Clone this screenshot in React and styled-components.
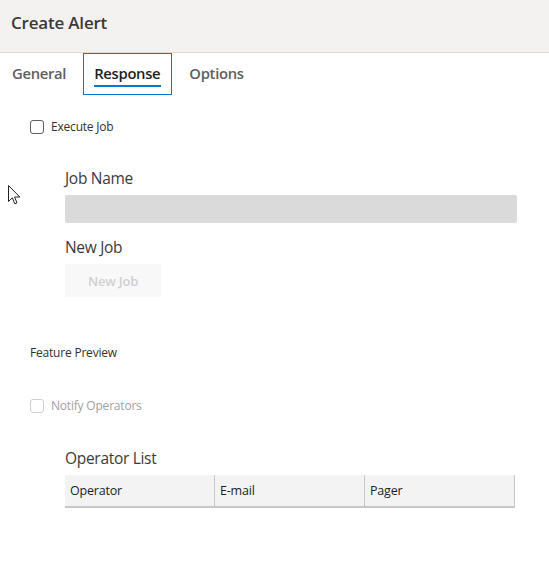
import React from 'react';
import styled, { createGlobalStyle } from 'styled-components';

const GlobalStyle = createGlobalStyle`
  html, body {
    margin: 0;
    padding: 0;
    background: #ffffff;
    font-family: "Open Sans", "Noto Sans", sans-serif;
    color: #323130;
  }
`;

const Page = styled.div`
  position: relative;
  width: 549px;
  height: 572px;
  overflow: hidden;
  background: #fff;
`;

const Header = styled.div`
  height: 53px;
  background: #f3f2f1;
  border-bottom: 1px solid #dcdcdc;
  display: flex;
  align-items: center;
  padding: 0 0 7px 11px;
  box-sizing: border-box;
  h1 {
    margin: 0;
    font-size: 17px;
    font-weight: 600;
    color: #3b3a39;
    letter-spacing: -0.2px;
  }
`;

const TabBar = styled.div`
  display: flex;
  height: 42px;
  align-items: stretch;
`;

const Tab = styled.div`
  position: relative;
  display: flex;
  align-items: center;
  box-sizing: border-box;
  padding: 0 ${(p) => (p.$first ? '0' : '10.5px')} 3px;
  margin-left: ${(p) => (p.$first ? '11px' : '0')};
  margin-right: ${(p) => (p.$first ? '15.5px' : '6px')};
  font-size: 14.8px;
  font-weight: 600;
  letter-spacing: -0.3px;
  color: ${(p) => (p.$active ? '#201f1e' : '#605e5c')};
  border: 1px solid ${(p) => (p.$active ? '#0078d4' : 'transparent')};
  &::after {
    content: '';
    display: ${(p) => (p.$active ? 'block' : 'none')};
    position: absolute;
    left: 10px;
    right: 10px;
    bottom: 7px;
    height: 2px;
    background: #0078d4;
  }
`;

const Body = styled.div`
  padding: 23px 0 0 30px;
`;

const CheckRow = styled.label`
  display: flex;
  align-items: center;
  gap: 7px;
  font-size: 12px;
  color: ${(p) => (p.$disabled ? '#a19f9d' : '#323130')};
  letter-spacing: -0.2px;
  margin-top: ${(p) => p.$gap || 0}px;
`;

const Box = styled.span`
  width: 14px;
  height: 14px;
  box-sizing: border-box;
  border: 1px solid ${(p) => (p.$disabled ? '#d2d0ce' : '#605e5c')};
  border-radius: 3px;
  background: #fff;
`;

const Indented = styled.div`
  padding-left: 35px;
  padding-right: 32px;
  margin-top: ${(p) => p.$gap}px;
`;

const FieldLabel = styled.div`
  font-size: 15.5px;
  color: #3b3a39;
  letter-spacing: -0.3px;
  line-height: 22px;
  margin-top: ${(p) => p.$gap || 0}px;
`;

const TextInput = styled.div`
  height: 28px;
  background: #dadada;
  border-radius: 2px;
  margin-top: 6px;
`;

const DisabledButton = styled.div`
  width: 96px;
  height: 33px;
  margin-top: 6px;
  border-radius: 2px;
  background: #f8f8f8;
  color: #d0d0d0;
  font-size: 13px;
  font-weight: 600;
  display: flex;
  align-items: center;
  justify-content: center;
  letter-spacing: -0.2px;
`;

const SmallText = styled.div`
  font-size: 12px;
  color: #323130;
  letter-spacing: -0.2px;
  margin-top: ${(p) => p.$gap}px;
`;

const Table = styled.div`
  display: grid;
  grid-template-columns: 150px 150px 150px;
  width: 450px;
  height: 33px;
  background: #f3f3f4;
  border-bottom: 2px solid #c6c6c6;
  box-sizing: border-box;
  margin-top: 6px;
`;

const HeadCell = styled.div`
  display: flex;
  align-items: center;
  padding-left: 5px;
  font-size: 12.5px;
  color: #201f1e;
  letter-spacing: -0.2px;
  border-right: 1px solid #c8c8c8;
`;

const Cursor = styled.svg`
  position: absolute;
  left: 8px;
  top: 185px;
`;

export default function App() {
  return (
    <Page>
      <GlobalStyle />
      <Header>
        <h1>Create Alert</h1>
      </Header>
      <TabBar>
        <Tab $first>General</Tab>
        <Tab $active>Response</Tab>
        <Tab>Options</Tab>
      </TabBar>
      <Body>
        <CheckRow>
          <Box />
          Execute Job
        </CheckRow>
        <Indented $gap={32}>
          <FieldLabel>Job Name</FieldLabel>
          <TextInput />
          <FieldLabel $gap={13}>New Job</FieldLabel>
          <DisabledButton>New Job</DisabledButton>
        </Indented>
        <SmallText $gap={47}>Feature Preview</SmallText>
        <CheckRow $disabled $gap={36}>
          <Box $disabled />
          Notify Operators
        </CheckRow>
        <Indented $gap={33}>
          <FieldLabel>Operator List</FieldLabel>
          <Table>
            <HeadCell>Operator</HeadCell>
            <HeadCell>E-mail</HeadCell>
            <HeadCell>Pager</HeadCell>
          </Table>
        </Indented>
      </Body>
      <Cursor width="13" height="21" viewBox="0 0 13 21">
        <path
          d="M0.5 0.5 L0.5 16.5 L4.3 12.8 L6.8 18.8 L9 17.9 L6.6 12 L11.8 12 Z"
          fill="#fff"
          stroke="#222"
          strokeWidth="1"
          strokeLinejoin="miter"
        />
      </Cursor>
    </Page>
  );
}
